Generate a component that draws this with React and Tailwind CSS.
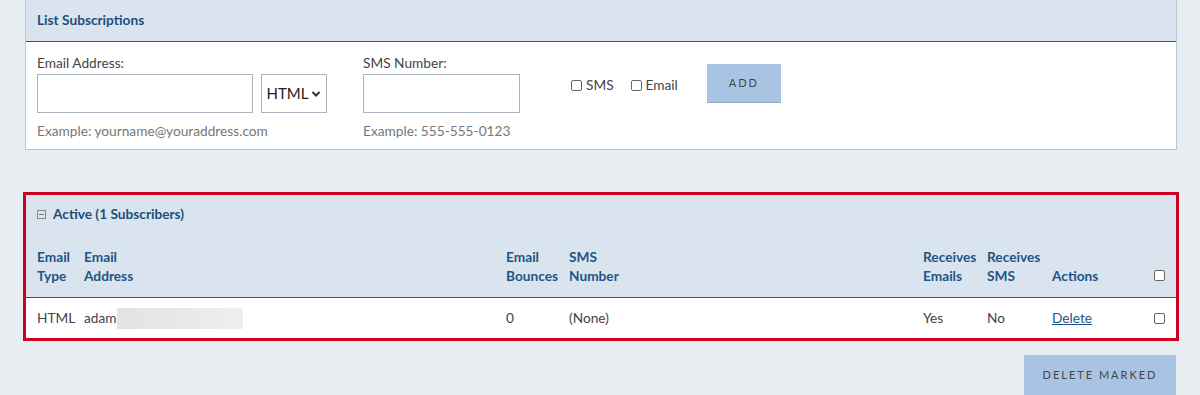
import React from "react";

const headCls = "text-[13.7px] font-bold text-[#1f5486] leading-[19px]";

export default function App() {
  return (
    <div className="w-[1200px] h-[395px] overflow-hidden bg-[#e8edf2] text-[13.7px] text-[#333]" style={{ fontFamily: "Lato, 'Noto Sans', sans-serif" }}>
      {/* List Subscriptions */}
      <div className="ml-[25px] w-[1152px] border border-t-0 border-[#b9c7d6] bg-white">
        <div className="h-[42px] bg-[#dae4ef] border-b border-[#1d5a8e] flex items-center px-[11px]">
          <span className="text-[13.7px] font-bold text-[#1f4e7c]">List Subscriptions</span>
        </div>
        <div className="flex items-start px-[11px] pt-[12px] h-[107px]">
          <div>
            <div className="text-[#444] leading-[18px]">Email Address:</div>
            <div className="flex gap-[8px] mt-[2px]">
              <input className="w-[216px] h-[39px] border border-[#a9b5c2] bg-white" />
              <div className="w-[66px] h-[39px] border border-[#a9b5c2] flex items-center justify-center gap-[3px] text-[15px] text-[#222]">
                HTML
                <svg width="10" height="8" viewBox="0 0 10 8"><path d="M1.5 2 L5 5.5 L8.5 2" fill="none" stroke="#333" strokeWidth="2" /></svg>
              </div>
            </div>
            <div className="mt-[8px] text-[#777]">Example: yourname@youraddress.com</div>
          </div>
          <div className="ml-[36px]">
            <div className="text-[#444] leading-[18px]">SMS Number:</div>
            <input className="w-[157px] h-[39px] mt-[2px] border border-[#a9b5c2] bg-white" />
            <div className="mt-[8px] text-[#777]">Example: 555-555-0123</div>
          </div>
          <div className="ml-[51px] mt-[21px] flex items-center gap-[17px] text-[#444]">
            <label className="flex items-center gap-[4px]"><span className="w-[11px] h-[11px] border border-[#666] rounded-[2px]"></span>SMS</label>
            <label className="flex items-center gap-[4px]"><span className="w-[11px] h-[11px] border border-[#666] rounded-[2px]"></span>Email</label>
          </div>
          <button className="ml-[29px] mt-[10px] w-[74px] h-[39px] bg-[#a8c4e2] border-b border-[#8fa9c4] text-[11px] tracking-[2px] text-[#444]">ADD</button>
        </div>
      </div>

      {/* Active */}
      <div className="mt-[42px] ml-[23px] w-[1156px] border-[3px] border-[#cc0022] bg-[#dae4ef]">
        <div className="h-[39px] flex items-center px-[11px] gap-[7px]">
          <span className="w-[9px] h-[9px] border border-[#888] flex items-center justify-center">
            <span className="w-[5px] h-[1px] bg-[#777]"></span>
          </span>
          <span className="text-[13.7px] font-bold text-[#1f4e7c]">Active (1 Subscribers)</span>
        </div>
        <div className="grid grid-cols-[47px_422px_63px_354px_64px_65px_1fr_24px] px-[11px] items-end h-[64px] pb-[12px] border-b border-[#1d5a8e]">
          <div className={headCls}>Email<br />Type</div>
          <div className={headCls}>Email<br />Address</div>
          <div className={headCls}>Email<br />Bounces</div>
          <div className={headCls}>SMS<br />Number</div>
          <div className={headCls}>Receives<br />Emails</div>
          <div className={headCls}>Receives<br />SMS</div>
          <div className={headCls}>Actions</div>
          <div className="flex justify-end pb-[4px]"><span className="w-[11px] h-[11px] border border-[#666] rounded-[2px] bg-white"></span></div>
        </div>
        <div className="grid grid-cols-[47px_422px_63px_354px_64px_65px_1fr_24px] px-[11px] items-center h-[40px] bg-white text-[#444]">
          <div>HTML</div>
          <div className="flex items-center">adam<span className="w-[126px] h-[21px] bg-gradient-to-r from-[#e2e2e2] to-[#efefef]"></span></div>
          <div>0</div>
          <div>(None)</div>
          <div>Yes</div>
          <div>No</div>
          <div><a className="underline text-[#1f5486]">Delete</a></div>
          <div className="flex justify-end"><span className="w-[11px] h-[11px] border border-[#666] rounded-[2px] bg-white"></span></div>
        </div>
      </div>

      <div className="flex justify-end pr-[24px] mt-[14px]">
        <button className="w-[152px] h-[40px] bg-[#a8c4e2] text-[11px] tracking-[2px] text-[#444]">DELETE MARKED</button>
      </div>
    </div>
  );
}
